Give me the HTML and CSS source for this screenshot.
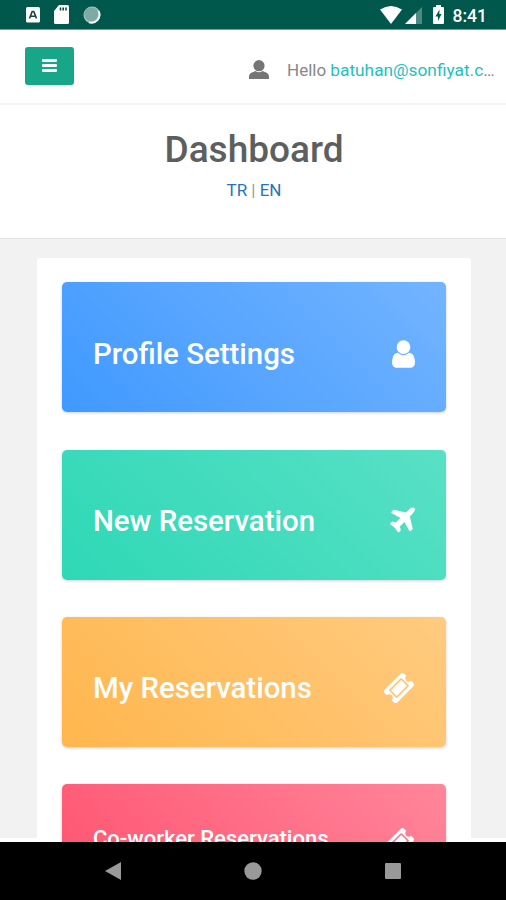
FILE: index.html
```html
<!DOCTYPE html>
<html lang="en">
<head>
    <meta charset="UTF-8">
    <meta name="viewport" content="width=device-width, initial-scale=1.0">
    <title>Dashboard</title>
    <link rel="stylesheet" href="styles.css">
</head>
<body>
    <div class="status-bar">
        <div class="status-left">
            <svg width="14" height="16" viewBox="0 0 14 16">
                <rect width="14" height="15.5" rx="1.5" fill="#fff"/>
                <path d="M3.5 11.5L6.2 4.5h1.6l2.7 7M4.8 9.3h4.4" fill="none" stroke="#17443c" stroke-width="1.6"/>
            </svg>
            <svg width="15" height="19" viewBox="0 0 15 19">
                <path d="M5 0h8.5Q15 0 15 1.5v16q0 1.5-1.5 1.5h-12Q0 19 0 17.5V6z" fill="#fff"/>
                <path d="M6.5 2.5v3M9.2 2.5v3M12 2.5v3" stroke="#17443c" stroke-width="1.6"/>
            </svg>
            <svg width="18" height="18" viewBox="0 0 18 18">
                <circle cx="9" cy="9" r="8.5" fill="#a9c5c1"/>
                <circle cx="8.3" cy="8.3" r="7" fill="#7fa9a3"/>
                <path d="M15.5 5A8 8 0 0 1 6 16.3" fill="none" stroke="#f2f7f6" stroke-width="1.8"/>
            </svg>
        </div>
        <div class="status-right">
            <svg class="wifi" width="22" height="18" viewBox="0 0 22 18">
                <path d="M0 3.5Q11-3.5 22 3.5L11 18z" fill="#fff"/>
            </svg>
            <svg class="signal" width="17" height="17" viewBox="0 0 17 17">
                <path d="M0 17L17 0v17z" fill="#4d8b81"/>
                <path d="M0 17L11 6v11z" fill="#fff"/>
            </svg>
            <svg class="battery" width="11" height="19" viewBox="0 0 11 19">
                <path d="M3 0h5v2h2q1 0 1 1v15q0 1-1 1H1q-1 0-1-1V3q0-1 1-1h2z" fill="#fff"/>
                <path d="M6.5 4.5L2.5 11.5h2.5v4.5l3.5-7H6.3z" fill="#00574b"/>
            </svg>
            <span class="clock">8:41</span>
        </div>
    </div>

    <div class="navbar">
        <button class="menu-btn" aria-label="Menu">
            <span></span>
            <span></span>
            <span></span>
        </button>
        <div class="account">
            <svg width="20" height="19" viewBox="0 0 20 19">
                <circle cx="10" cy="5.7" r="5.6" fill="#757575"/>
                <path d="M0 19v-2.5Q0 13.5 3.5 12.2L6.5 11Q10 13.5 13.5 11l3 1.2Q20 13.5 20 16.5V19z" fill="#757575"/>
            </svg>
            <div class="hello">Hello <a href="#">batuhan@sonfiyat.com</a></div>
        </div>
    </div>

    <div class="page-header">
        <h1>Dashboard</h1>
        <div class="languages"><a href="#">TR</a> | <a href="#">EN</a></div>
    </div>

    <div class="content">
        <div class="panel">
            <a class="card card-blue" href="#">
                <span class="card-title">Profile Settings</span>
                <svg class="icon icon-user" viewBox="256 0 1280 1792"><path d="M1536 1399q0 109-62.500 187t-150.500 78h-854q-88 0-150.500-78t-62.500-187q0-85 8.500-160.500t31.500-152 58.500-131 94-89 134.500-34.500q131 128 313 128t313-128q76 0 134.500 34.500t94 89 58.500 131 31.500 152 8.500 160.500zm-256-887q0 159-112.500 271.500t-271.500 112.500-271.500-112.500-112.500-271.500 112.500-271.500 271.500-112.500 271.500 112.500 112.500 271.500z"/></svg>
            </a>
            <a class="card card-green" href="#">
                <span class="card-title">New Reservation</span>
                <svg class="icon icon-plane" viewBox="192 0 1408 1792"><path d="M1568 160q44 52 12 148t-108 172l-161 161 160 696q5 19-12 33l-128 96q-7 6-19 6-4 0-7-1-15-3-21-14l-279-508-259 259 53 194q5 17-8 31l-96 96q-9 9-23 9h-2q-15-2-24-13l-189-252-252-189q-11-7-13-23-1-13 9-25l96-97q9-9 23-9 6 0 8 1l194 53 259-259-508-279q-14-8-17-24-2-16 9-27l128-128q14-13 30-8l665 159 160-160q76-76 172-108t148 12z"/></svg>
            </a>
            <a class="card card-orange" href="#">
                <span class="card-title">My Reservations</span>
                <svg class="icon icon-ticket" viewBox="0 0 1792 1792"><path d="M1024 452l316 316-572 572-316-316zm-211 979l618-618q19-19 19-45t-19-45l-362-362q-18-18-45-18t-45 18l-618 618q-19 19-19 45t19 45l362 362q18 18 45 18t45-18zm889-637l-907 908q-37 37-90.500 37t-90.500-37l-126-126q56-56 56-136t-56-136-136-56-136 56l-125-126q-37-37-37-90.500t37-90.500l907-906q37-37 90.500-37t90.500 37l125 125q-56 56-56 136t56 136 136 56 136-56l126 125q37 37 37 90.500t-37 90.500z"/></svg>
            </a>
            <a class="card card-pink" href="#">
                <span class="card-title">Co-worker Reservations</span>
                <svg class="icon icon-ticket" viewBox="0 0 1792 1792"><path d="M1024 452l316 316-572 572-316-316zm-211 979l618-618q19-19 19-45t-19-45l-362-362q-18-18-45-18t-45 18l-618 618q-19 19-19 45t19 45l362 362q18 18 45 18t45-18zm889-637l-907 908q-37 37-90.500 37t-90.500-37l-126-126q56-56 56-136t-56-136-136-56-136 56l-125-126q-37-37-37-90.500t37-90.500l907-906q37-37 90.500-37t90.500 37l125 125q-56 56-56 136t56 136 136 56 136-56l126 125q37 37 37 90.500t-37 90.500z"/></svg>
            </a>
        </div>
    </div>

    <div class="system-nav">
        <svg width="16" height="18" viewBox="0 0 16 18"><path d="M16 0v18L0 9z"/></svg>
        <svg width="18" height="18" viewBox="0 0 18 18"><circle cx="9" cy="9" r="8.7"/></svg>
        <svg width="16" height="16" viewBox="0 0 16 16"><rect width="16" height="16" rx="1"/></svg>
    </div>
</body>
</html>
```
FILE: styles.css
```css
* {
    box-sizing: border-box;
}

body {
    margin: 0;
    height: 900px;
    display: flex;
    flex-direction: column;
    overflow: hidden;
    background-color: #fff;
    font-family: Roboto, sans-serif;
}

a {
    text-decoration: none;
}

svg {
    display: block;
    flex-shrink: 0;
}

/* Android status bar */
.status-bar {
    flex: 0 0 30px;
    display: flex;
    justify-content: space-between;
    background-color: #00574b;
    border-bottom: 1px solid #7a9d97;
    padding: 0 19px 0 26px;
}

.status-left,
.status-right {
    display: flex;
    align-items: center;
}

.status-left {
    gap: 14px;
}

.signal {
    margin-left: 3px;
    margin-top: 2px;
}

.battery {
    margin-left: 11px;
    margin-right: 9px;
}

.clock {
    color: #fff;
    font-size: 17.5px;
    font-weight: 500;
    line-height: 24px;
    padding-top: 2px;
}

/* Top bar */
.navbar {
    flex: 0 0 75px;
    display: flex;
    justify-content: space-between;
    align-items: flex-start;
    border-bottom: 2px solid #f4f4f4;
    padding: 17px 10px 0 25px;
}

.menu-btn {
    width: 49px;
    height: 38px;
    display: flex;
    flex-direction: column;
    align-items: center;
    gap: 2px;
    background-color: #18a689;
    border: none;
    border-radius: 3px;
    padding: 12px 0 0;
}

.menu-btn span {
    width: 15px;
    height: 3px;
    border-radius: 1px;
    background-color: #fff;
}

.account {
    display: flex;
    align-items: center;
    gap: 18px;
    margin-top: 12px;
}

.account svg {
    margin-bottom: 1px;
}

.hello {
    width: 209px;
    overflow: hidden;
    white-space: nowrap;
    text-overflow: ellipsis;
    color: #888;
    font-size: 17px;
    line-height: 22px;
}

.hello a {
    color: #23bfc0;
    font-size: 17.3px;
}

/* Page title */
.page-header {
    flex: 0 0 134px;
    border-bottom: 1px solid #e2e2e2;
    padding: 22px 0 0 2px;
    text-align: center;
}

h1 {
    margin: 0;
    color: #5c5f60;
    font-size: 37px;
    font-weight: 500;
    line-height: 45px;
}

.languages {
    margin-top: 8px;
    color: #999;
    font-size: 17px;
    line-height: 20px;
}

.languages a {
    color: #2474bd;
}

/* Cards */
.content {
    flex: 1;
    min-height: 0;
    overflow: hidden;
    background: linear-gradient(#f2f2f2, #f2f2f2) no-repeat 0 0 / 100% 599px #fff;
    padding: 19px 35px 0 37px;
}

.panel {
    background-color: #fff;
    border-radius: 2px;
    padding: 24.4px 25px;
}

.card {
    height: 130px;
    display: flex;
    justify-content: space-between;
    align-items: center;
    margin-bottom: 37.3px;
    padding: 13px 31px 0;
    border-radius: 5px;
    box-shadow: 0 1px 3px rgba(4, 26, 55, 0.2);
    color: #fff;
}

.card-title {
    font-size: 29.4px;
    font-weight: 500;
}

.card-blue {
    background: linear-gradient(45deg, #4099ff, #73b4ff);
}

.card-green {
    background: linear-gradient(45deg, #2ed8b6, #59e0c5);
}

.card-orange {
    background: linear-gradient(45deg, #ffb64d, #ffcb80);
}

.card-pink {
    height: 105px;
    background: linear-gradient(45deg, #ff5370, #ff869a);
}

.card-pink .card-title {
    margin-bottom: 10px;
    font-size: 22px;
}

.icon {
    height: 32px;
    fill: #fff;
}

.icon-user {
    width: 23px;
}

.icon-plane {
    width: 25px;
}

.icon-ticket {
    width: 32px;
}

/* Android navigation buttons */
.system-nav {
    flex: 0 0 58px;
    display: flex;
    justify-content: space-between;
    align-items: center;
    background-color: #000;
    padding: 0 105px;
    fill: #999;
}
```
